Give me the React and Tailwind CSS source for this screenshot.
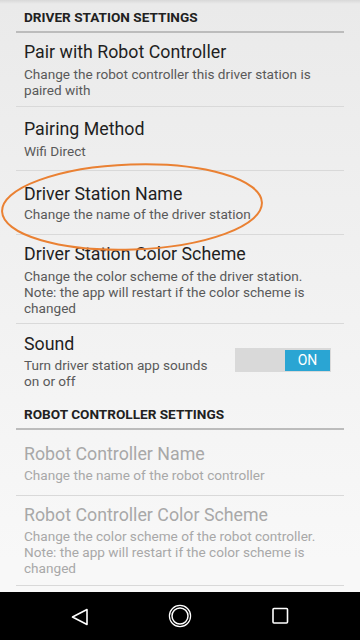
import React from "react";

const font = { fontFamily: "Roboto, 'Noto Sans', sans-serif" };

function Header({ children, className = "" }) {
  return (
    <div className={className}>
      <div className="px-6 text-[13.6px] leading-4 font-bold text-[#212121]">{children}</div>
      <div className="mx-4 h-[2px] bg-[#bcbcbc] mt-[6px]" />
    </div>
  );
}

function Item({ title, lines, disabled, pt, pb, mt = 2, divider = true, right }) {
  return (
    <div>
      <div className={`px-6 flex items-start ${pt} ${pb}`}>
        <div className="flex-1 whitespace-nowrap">
          <div className={`text-[17.8px] leading-[22px] ${disabled ? "text-[#a8a8a8]" : "text-[#1f1f1f]"}`}>{title}</div>
          <div className={`${mt} text-[13.6px] leading-4 ${disabled ? "text-[#a8a8a8]" : "text-[#595959]"}`}>
            {lines.map((l, i) => (
              <div key={i}>{l}</div>
            ))}
          </div>
        </div>
        {right}
      </div>
      {divider && <div className="mx-4 h-px bg-[#d9d9d9]" />}
    </div>
  );
}

export default function App() {
  return (
    <div style={font} className="relative w-[360px] h-[640px] overflow-hidden flex flex-col bg-[linear-gradient(to_bottom,#d8d8d8_0px,#eaeaea_4px,#ededed_120px,#f8f8f8_560px)]">
      <div className="flex-1">
        <Header className="pt-[9px]">DRIVER STATION SETTINGS</Header>
        <Item
          title="Pair with Robot Controller"
          lines={["Change the robot controller this driver station is", "paired with"]}
          pt="pt-[8px]"
          pb="pb-[8px]"
          mt="mt-[3px]"
        />
        <Item title="Pairing Method" lines={["Wifi Direct"]} pt="pt-[11px]" pb="pb-[11px]" mt="mt-[3px]" />
        <Item title="Driver Station Name" lines={["Change the name of the driver station"]} pt="pt-[12px]" pb="pb-[12px]" mt="mt-[1px]" />
        <Item
          title="Driver Station Color Scheme"
          lines={[
            "Change the color scheme of the driver station.",
            "Note: the app will restart if the color scheme is",
            "changed",
          ]}
          pt="pt-[8px]"
          pb="pb-[7px]"
          mt="mt-[3px]"
        />
        <Item
          title="Sound"
          lines={["Turn driver station app sounds", "on or off"]}
          pt="pt-[9px]"
          pb="pb-[17px]"
          mt="mt-[2px]"
          divider={false}
          right={
            <div className="mt-[15px] mr-[5px] w-[96px] h-[24px] bg-[#d9d9d9] flex justify-end items-center pr-[1px]">
              <div className="w-[45px] h-[21px] bg-[#2aa5d3] text-white text-[14px] flex items-center justify-center">ON</div>
            </div>
          }
        />
        <Header>ROBOT CONTROLLER SETTINGS</Header>
        <Item
          title="Robot Controller Name"
          lines={["Change the name of the robot controller"]}
          disabled
          pt="pt-[13px]"
          pb="pb-[12px]"
          mt="mt-[2px]"
        />
        <Item
          title="Robot Controller Color Scheme"
          lines={[
            "Change the color scheme of the robot controller.",
            "Note: the app will restart if the color scheme is",
            "changed",
          ]}
          disabled
          pt="pt-[8px]"
          pb="pb-[9px]"
          mt="mt-[2px]"
        />
      </div>
      <div className="h-[48px] bg-black flex items-center justify-center shrink-0">
        <svg width="360" height="48" viewBox="0 0 360 48">
          <path d="M72.5 25 L87 17.5 L87 32.5 Z" fill="none" stroke="white" strokeWidth="1.6" strokeLinejoin="round" />
          <circle cx="180" cy="24" r="10.6" fill="none" stroke="white" strokeWidth="1.2" />
          <circle cx="180" cy="24" r="8" fill="none" stroke="white" strokeWidth="1.5" />
          <rect x="273" y="16.5" width="14.5" height="14.5" rx="1" fill="none" stroke="white" strokeWidth="1.6" />
        </svg>
      </div>
      <svg className="absolute left-0 top-[155px] pointer-events-none" width="280" height="110" viewBox="0 155 280 110">
        <ellipse cx="132" cy="207" rx="130" ry="42.5" fill="none" stroke="#ea8133" strokeWidth="2" transform="rotate(-2 132 207)" />
      </svg>
    </div>
  );
}
